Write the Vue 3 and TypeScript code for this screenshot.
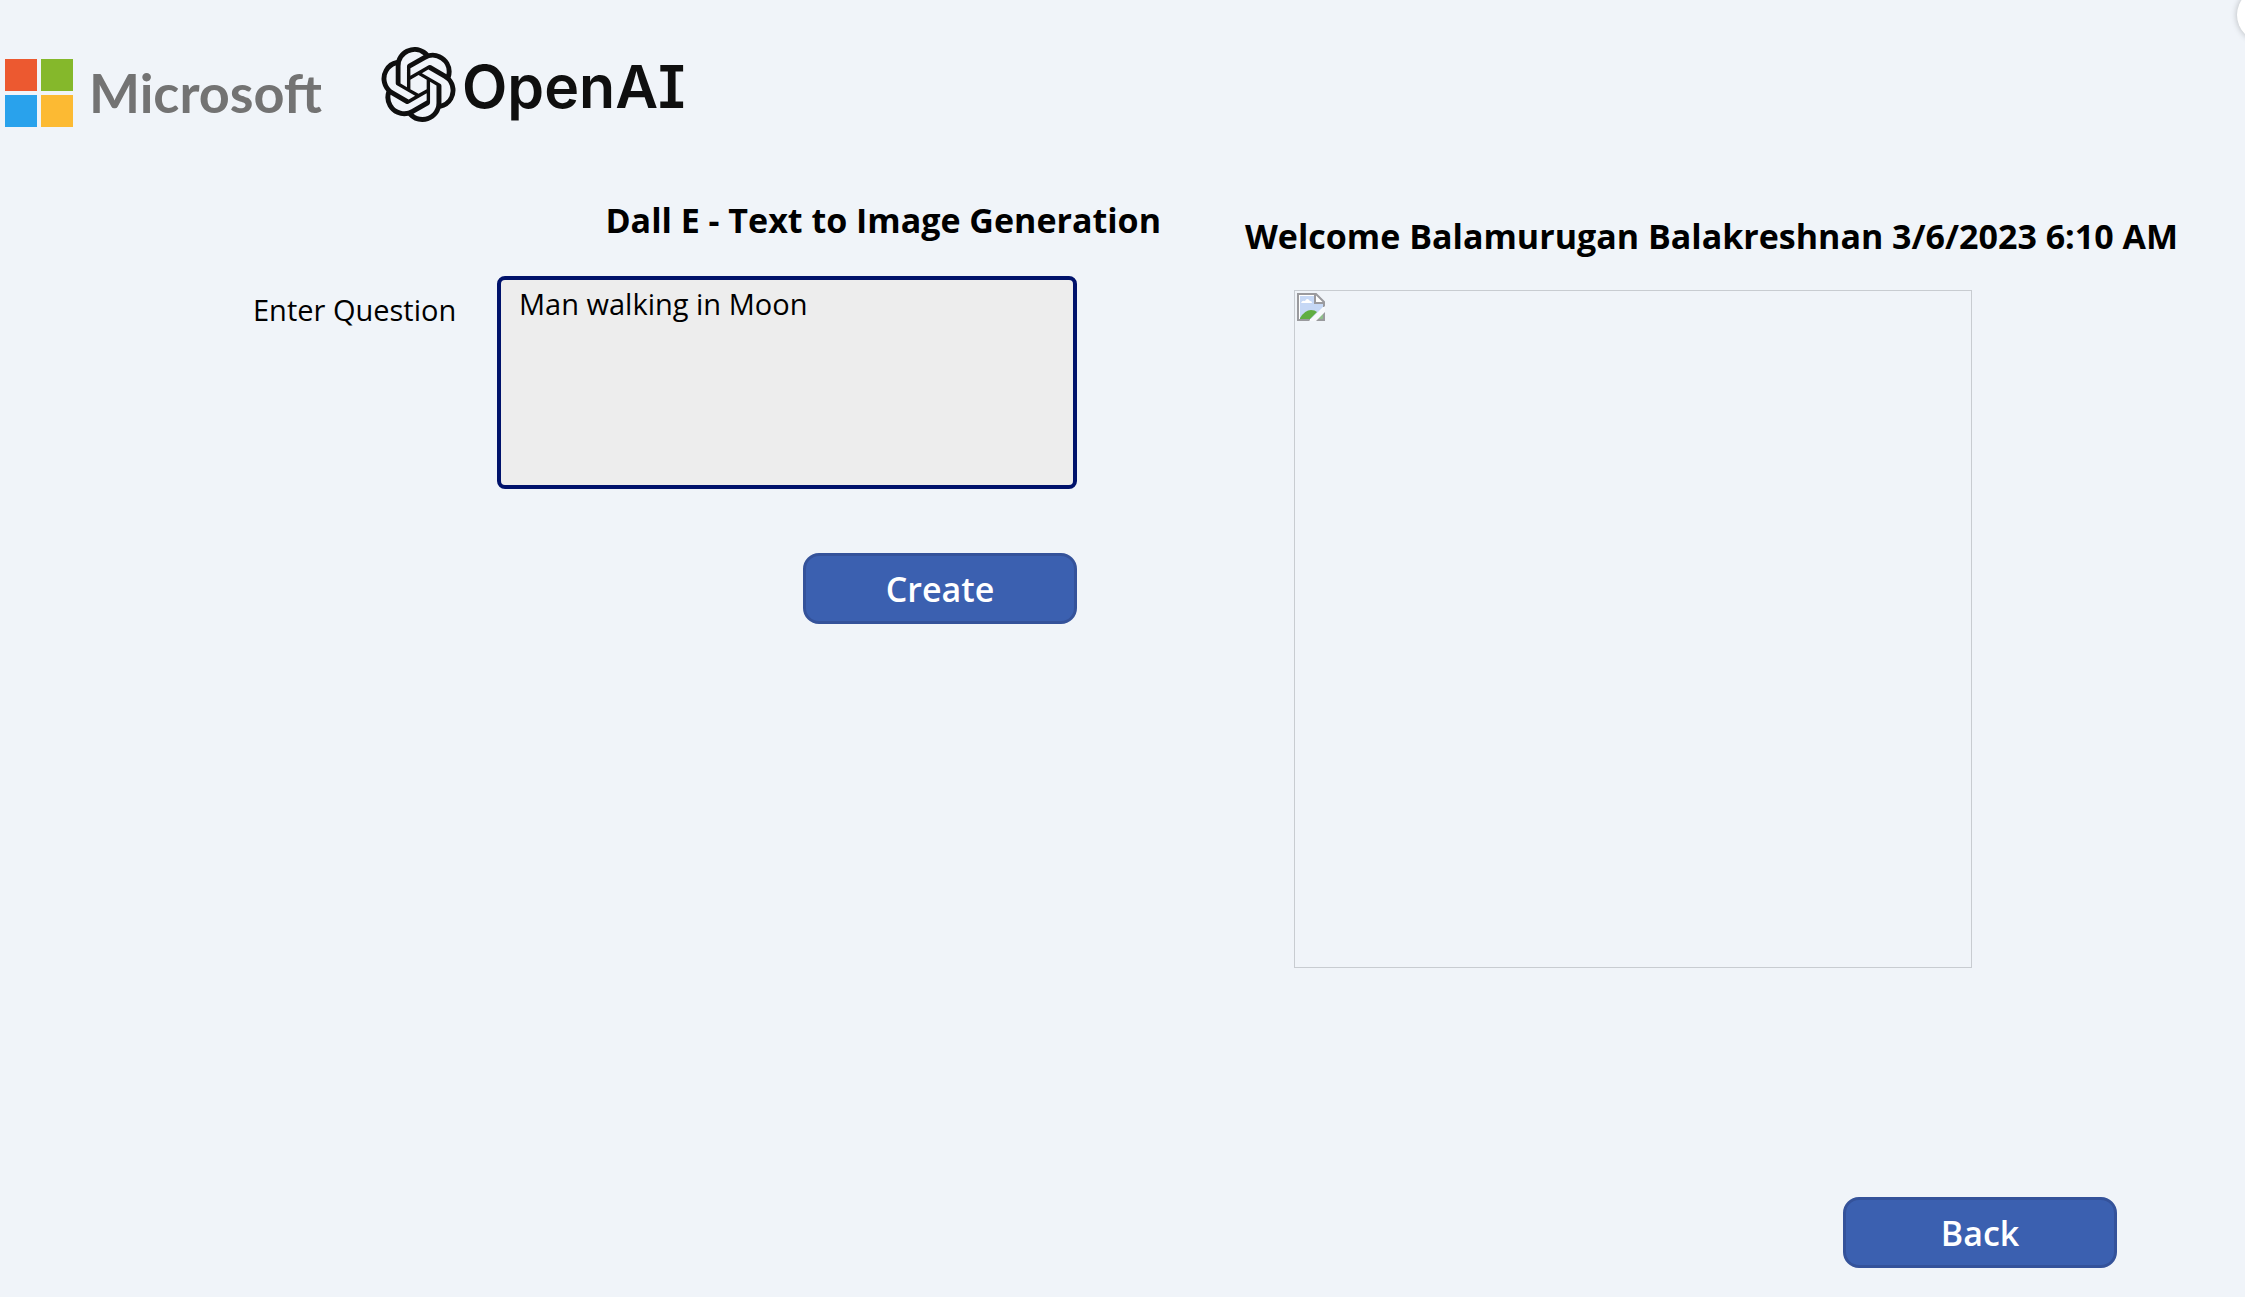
<script setup lang="ts">
import { ref } from 'vue'

const question = ref<string>('Man walking in Moon')
const userName = 'Balamurugan Balakreshnan'
const signedInAt = '3/6/2023 6:10 AM'
</script>

<template>
  <div class="page">
    <header class="brands">
      <div class="microsoft">
        <span class="tiles" aria-hidden="true">
          <i class="tile red"></i>
          <i class="tile green"></i>
          <i class="tile blue"></i>
          <i class="tile yellow"></i>
        </span>
        <span class="microsoft-name">Microsoft</span>
      </div>
      <div class="openai">
        <svg class="knot" viewBox="0 0 24 24" aria-hidden="true">
          <path
            d="M22.2819 9.8211a5.9847 5.9847 0 0 0-.5157-4.9108 6.0462 6.0462 0 0 0-6.5098-2.9A6.0651 6.0651 0 0 0 4.9807 4.1818a5.9847 5.9847 0 0 0-3.9977 2.9 6.0462 6.0462 0 0 0 .7427 7.0966 5.98 5.98 0 0 0 .511 4.9107 6.051 6.051 0 0 0 6.5146 2.9001A5.9847 5.9847 0 0 0 13.2599 24a6.0557 6.0557 0 0 0 5.7718-4.2058 5.9894 5.9894 0 0 0 3.9977-2.9001 6.0557 6.0557 0 0 0-.7475-7.0729zm-9.022 12.6081a4.4755 4.4755 0 0 1-2.8764-1.0408l.1419-.0804 4.7783-2.7582a.7948.7948 0 0 0 .3927-.6813v-6.7369l2.02 1.1686a.071.071 0 0 1 .038.052v5.5826a4.504 4.504 0 0 1-4.4945 4.4944zm-9.6607-4.1254a4.4708 4.4708 0 0 1-.5346-3.0137l.142.0852 4.783 2.7582a.7712.7712 0 0 0 .7806 0l5.8428-3.3685v2.3324a.0804.0804 0 0 1-.0332.0615L9.74 19.9502a4.4992 4.4992 0 0 1-6.1408-1.6464zM2.3408 7.8956a4.485 4.485 0 0 1 2.3655-1.9728V11.6a.7664.7664 0 0 0 .3879.6765l5.8144 3.3543-2.0201 1.1685a.0757.0757 0 0 1-.071 0l-4.8303-2.7865A4.504 4.504 0 0 1 2.3408 7.872zm16.5963 3.8558L13.1038 8.364 15.1192 7.2a.0757.0757 0 0 1 .071 0l4.8303 2.7913a4.4944 4.4944 0 0 1-.6765 8.1042v-5.6772a.79.79 0 0 0-.407-.667zm2.0107-3.0231l-.142-.0852-4.7735-2.7818a.7759.7759 0 0 0-.7854 0L9.409 9.2297V6.8974a.0662.0662 0 0 1 .0284-.0615l4.8303-2.7866a4.4992 4.4992 0 0 1 6.6802 4.66zM8.3065 12.863l-2.02-1.1638a.0804.0804 0 0 1-.038-.0567V6.0742a4.4992 4.4992 0 0 1 7.3757-3.4537l-.142.0805L8.704 5.459a.7948.7948 0 0 0-.3927.6813zm1.0976-2.3654l2.602-1.4998 2.6069 1.4998v2.9994l-2.5974 1.4997-2.6067-1.4997Z"
          />
        </svg>
        <span class="openai-name">OpenAI</span>
      </div>
    </header>

    <main class="content">
      <section class="prompt">
        <h1 class="title">Dall E - Text to Image Generation</h1>
        <div class="field">
          <label class="field-label" for="question">Enter Question</label>
          <textarea id="question" v-model="question" class="field-input" spellcheck="false"></textarea>
        </div>
        <button class="button" type="button">Create</button>
      </section>

      <section class="result">
        <h2 class="title">Welcome {{ userName }} {{ signedInAt }}</h2>
        <div class="picture">
          <svg class="broken" viewBox="0 0 28 28" aria-hidden="true">
            <path d="M1 1H19L27 9V27H1Z" fill="#fff" />
            <path d="M3 3H18V10H26V14L14 26H3Z" fill="#c6d8f5" />
            <path d="M4 10q1-3 4-2 2-4 5 0 2 0 2 2Z" fill="#fff" />
            <path d="M3 25Q8 17 14 17q4 0 6 2L13 26H3Z" fill="#5fae42" />
            <path d="M19 26l7-7v7Z" fill="#8fbf8a" />
            <path d="M27 14V9L19 1H1V27H13M18 27H27V19M18 1V10H27" fill="none" stroke="#9a9a9e" stroke-width="2" />
            <path d="M28 13V19L19 28H12Z" fill="#f7f9fc" />
          </svg>
        </div>
      </section>
    </main>

    <footer class="footer">
      <button class="button" type="button">Back</button>
    </footer>

    <span class="bubble" aria-hidden="true"></span>
  </div>
</template>

<style>
body {
  margin: 0;
  background: #f0f4f9;
}
</style>

<style scoped>
.page {
  position: relative;
  box-sizing: border-box;
  display: flex;
  flex-direction: column;
  min-height: 100vh;
  overflow: hidden;
  padding-bottom: 29px;
  background: #f0f4f9;
  color: #000;
  font-family: 'Open Sans', 'Noto Sans', sans-serif;
}

.brands {
  display: flex;
  align-items: flex-start;
  gap: 60px;
  padding: 47px 5px 0;
}

.microsoft {
  display: flex;
  align-items: center;
  gap: 16px;
  width: 316px;
  margin-top: 12px;
}

.tiles {
  display: grid;
  grid-template-columns: 32px 32px;
  grid-auto-rows: 32px;
  gap: 4px;
}

.red {
  background: #ec5930;
}

.green {
  background: #85b82b;
}

.blue {
  background: #29a2ec;
}

.yellow {
  background: #fcba33;
}

.microsoft-name {
  color: #737373;
  font-family: Lato, sans-serif;
  font-size: 54px;
  font-weight: 700;
  line-height: 68px;
}

.openai {
  display: flex;
  align-items: flex-start;
  gap: 6px;
  color: #0f0f0f;
}

.knot {
  width: 75px;
  height: 75px;
  fill: currentColor;
}

.openai-name {
  font-family: Inter, sans-serif;
  font-size: 59px;
  font-weight: 600;
  font-feature-settings: 'cv08' 1;
  line-height: 80px;
}

.content {
  display: grid;
  grid-template-columns: 1245fr 1000fr;
  padding-top: 69px;
}

.title {
  margin: 0;
  font-size: 34px;
  font-weight: 700;
  line-height: 48px;
  white-space: nowrap;
}

.prompt {
  display: flex;
  flex-direction: column;
  align-items: flex-end;
  padding-right: 84px;
}

.field {
  display: flex;
  align-items: flex-start;
  box-sizing: border-box;
  width: 100%;
  margin-top: 32px;
  padding: 0 84px 64px 253px;
}

.field-label {
  width: 244px;
  padding-top: 14px;
  font-size: 29px;
  line-height: 40px;
}

.field-input {
  flex: 1;
  box-sizing: border-box;
  min-width: 0;
  height: 213px;
  padding: 4px 18px;
  border: 4px solid #00126b;
  border-radius: 8px;
  outline: none;
  background: #ededed;
  color: #000;
  font: 400 29px/40px 'Open Sans', 'Noto Sans', sans-serif;
  resize: none;
}

.button {
  box-sizing: border-box;
  width: 274px;
  height: 71px;
  padding: 0;
  border: 3px solid #34529a;
  border-radius: 16px;
  background: #3b60b0;
  color: #fff;
  font: 600 34px/48px 'Open Sans', 'Noto Sans', sans-serif;
}

.prompt .button {
  margin-right: 84px;
}

.result {
  padding-top: 16px;
}

.picture {
  box-sizing: border-box;
  width: 678px;
  height: 678px;
  margin: 30px 0 0 49px;
  padding: 2px;
  border: 1px solid #c8ccd1;
}

.broken {
  display: block;
  width: 28px;
  height: 28px;
}

.footer {
  display: flex;
  justify-content: flex-end;
  margin-top: auto;
  padding-right: 128px;
}

.bubble {
  position: absolute;
  top: -12px;
  right: -46px;
  width: 54px;
  height: 54px;
  border-radius: 50%;
  background: #fff;
  box-shadow: 0 0 6px #00000040;
}
</style>
